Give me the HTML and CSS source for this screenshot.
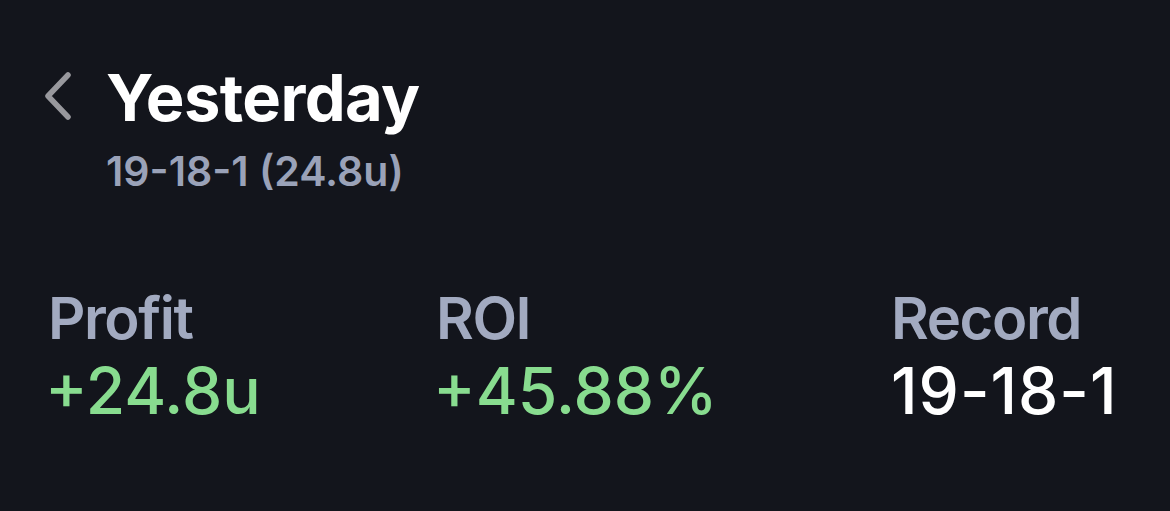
FILE: index.html
```html
<!DOCTYPE html>
<html>
<head>
<meta charset="utf-8">
<link rel="stylesheet" href="styles.css">
</head>
<body>
<div class="screen">
  <header class="header">
    <svg class="back" width="32" height="48" viewBox="0 0 32 48" aria-hidden="true">
      <path d="M26 3 L6 24 L26 45" fill="none" stroke="#98989d" stroke-width="5.5" stroke-linecap="round" stroke-linejoin="round"/>
    </svg>
    <div class="titles">
      <h1 class="title">Yesterday</h1>
      <div class="subtitle">19-18-1 (24.8u)</div>
    </div>
  </header>
  <section class="stats">
    <div class="stat">
      <div class="label">Profit</div>
      <div class="value green">+24.8u</div>
    </div>
    <div class="stat">
      <div class="label">ROI</div>
      <div class="value green">+45.88%</div>
    </div>
    <div class="stat">
      <div class="label">Record</div>
      <div class="value white">19-18-1</div>
    </div>
  </section>
</div>
</body>
</html>
```
FILE: styles.css
```css
html, body {
  margin: 0;
  padding: 0;
  background: #13151c;
}
body {
  font-family: Inter, "Noto Sans", sans-serif;
  width: 1170px;
  height: 511px;
  overflow: hidden;
}
.screen {
  padding: 60px 0 0 42px;
}
.header {
  display: flex;
  align-items: flex-start;
  gap: 32px;
}
.back {
  margin-top: 12px;
  flex: none;
}
.titles {
  display: flex;
  flex-direction: column;
}
.title {
  margin: 0;
  font-size: 65px;
  font-weight: 700;
  line-height: 76px;
  color: #ffffff;
  letter-spacing: -0.6px;
}
.subtitle {
  font-size: 41px;
  font-weight: 600;
  line-height: 46px;
  color: #9aa2b8;
  margin-top: 12px;
  letter-spacing: 0;
}
.stats {
  display: grid;
  grid-template-columns: 388px 455px auto;
  margin-top: 90px;
  padding-left: 6px;
}
.stat {
  display: flex;
  flex-direction: column;
}
.label {
  font-size: 58px;
  font-weight: 600;
  line-height: 68px;
  color: #a2aac0;
  letter-spacing: -1.4px;
}
.value {
  font-size: 64px;
  font-weight: 500;
  line-height: 77px;
  letter-spacing: 0;
}
.value.green {
  margin-left: -3px;
}
.value.white {
  letter-spacing: 1px;
}
.green { color: #88dc8f; }
.white { color: #ffffff; }
```
